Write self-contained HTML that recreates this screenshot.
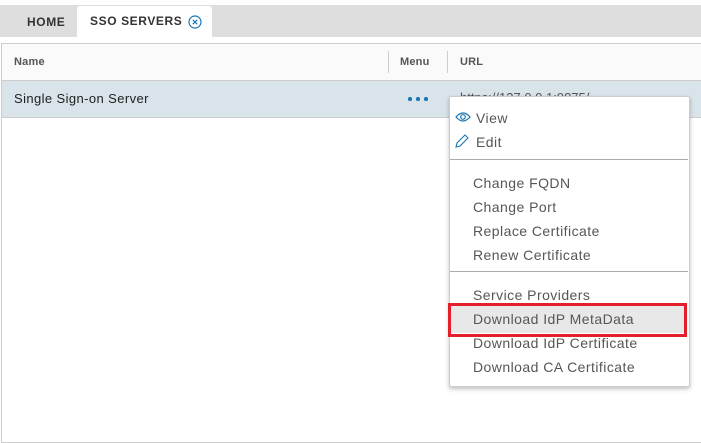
<!DOCTYPE html>
<html><head><style>
body{margin:0;width:701px;height:400px;background:#fff;font-family:"Liberation Sans",sans-serif;position:relative;overflow:hidden}
.abs{position:absolute}
.tabbar{left:0;top:5px;width:701px;height:32px;background:#dedede}
.tab{font-size:12px;font-weight:bold;letter-spacing:.6px;color:#333}
.grid{left:1px;top:43px;width:700px;height:400px;border:1px solid #ccc;border-right:none;box-sizing:border-box}
.hdr{left:2px;top:44px;width:699px;height:36px;background:#fafafa;border-bottom:1px solid #ccc}
.hd{font-size:11px;font-weight:bold;color:#555;top:56px;letter-spacing:.2px}
.row{left:2px;top:81px;width:699px;height:36px;background:#d9e3ea;border-bottom:1px solid #ccc}
.menu{left:449px;top:96px;width:239px;height:289px;background:#fff;border:1px solid #ccc;box-shadow:0 2px 4px rgba(0,0,0,.25);border-radius:2px}
.it{left:473px;font-size:14px;color:#565656;letter-spacing:.45px}
.sep{left:450px;width:238px;height:1px;background:#aaa}
.dot{width:3.5px;height:3.5px;border-radius:50%;background:#1a76b0;top:97px}
</style></head><body>
<div class="abs tabbar"></div>
<div class="abs" style="left:77px;top:6px;width:135px;height:32px;background:#fff;border-radius:3px 3px 0 0"></div>
<div class="abs tab" style="left:27px;top:15px">HOME</div>
<div class="abs tab" style="left:90px;top:14px">SSO SERVERS</div>
<svg class="abs" style="left:188px;top:15px" width="14" height="14"><circle cx="7" cy="7" r="6" fill="none" stroke="#1a76b0" stroke-width="1.2"/><path d="M4.8 4.8L9.2 9.2M9.2 4.8L4.8 9.2" stroke="#1a76b0" stroke-width="1.2"/></svg>
<div class="abs grid"></div>
<div class="abs hdr"></div>
<div class="abs" style="left:388px;top:51px;width:1px;height:22px;background:#ccc"></div>
<div class="abs" style="left:447px;top:51px;width:1px;height:22px;background:#ccc"></div>
<div class="abs hd" style="left:14px">Name</div>
<div class="abs hd" style="left:400px">Menu</div>
<div class="abs hd" style="left:460px">URL</div>
<div class="abs row"></div>
<div class="abs" style="left:14px;top:91px;font-size:13px;color:#222;letter-spacing:.4px">Single Sign-on Server</div>
<div class="abs dot" style="left:408px"></div>
<div class="abs dot" style="left:416px"></div>
<div class="abs dot" style="left:424px"></div>
<div class="abs" style="left:460px;top:90px;font-size:13px;color:#555">https://127.0.0.1:9875/</div>
<div class="abs menu"></div>
<svg class="abs" style="left:455px;top:111px" width="16" height="12"><path d="M1 6Q8 -2 15 6Q8 14 1 6Z" fill="none" stroke="#1a76b0" stroke-width="1.2"/><circle cx="8" cy="6" r="2.3" fill="none" stroke="#1a76b0" stroke-width="1.2"/></svg>
<svg class="abs" style="left:455px;top:134px" width="14" height="14"><path d="M1 13L2 9L10 1L13 4L5 12Z" fill="none" stroke="#1a76b0" stroke-width="1.1"/></svg>
<div class="abs it" style="left:476px;top:110px">View</div>
<div class="abs it" style="left:476px;top:134px">Edit</div>
<div class="abs sep" style="top:159px"></div>
<div class="abs it" style="top:175px">Change FQDN</div>
<div class="abs it" style="top:199px">Change Port</div>
<div class="abs it" style="top:223px">Replace Certificate</div>
<div class="abs it" style="top:247px">Renew Certificate</div>
<div class="abs sep" style="top:271px"></div>
<div class="abs it" style="top:287px">Service Providers</div>
<div class="abs" style="left:451px;top:306px;width:234px;height:27px;background:#e8e8e8"></div>
<div class="abs it" style="top:311px">Download IdP MetaData</div>
<div class="abs it" style="top:335px">Download IdP Certificate</div>
<div class="abs it" style="top:359px">Download CA Certificate</div>
<div class="abs" style="left:448px;top:303px;width:239px;height:34px;border:3px solid #e3202a;box-sizing:border-box"></div>
</body></html>
